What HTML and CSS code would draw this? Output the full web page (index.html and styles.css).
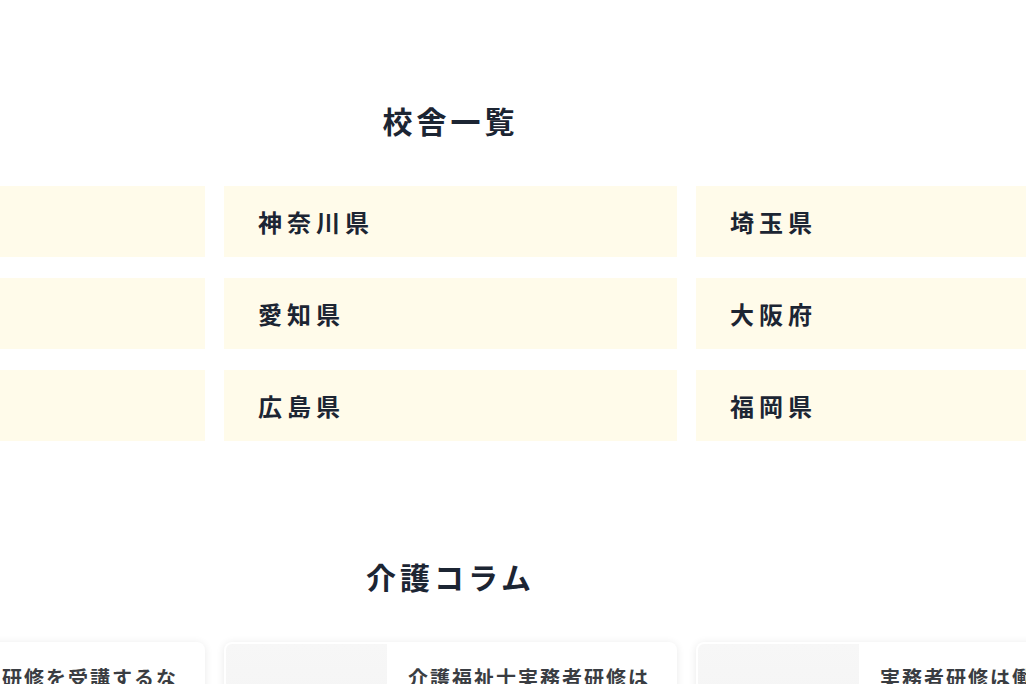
FILE: index.html
```html
<!DOCTYPE html>
<html lang="ja">
<head>
    <meta charset="UTF-8">
    <meta name="viewport" content="width=device-width, initial-scale=1.0">
    <title>校舎一覧</title>
    <link rel="stylesheet" href="styles.css">
</head>
<body>
    <section class="section schools">
        <h2 class="section-title">校舎一覧</h2>
        <ul class="pref-list">
            <li class="pref-item"><a href="#">東京都</a></li>
            <li class="pref-item"><a href="#">神奈川県</a></li>
            <li class="pref-item"><a href="#">埼玉県</a></li>
            <li class="pref-item"><a href="#">千葉県</a></li>
            <li class="pref-item"><a href="#">愛知県</a></li>
            <li class="pref-item"><a href="#">大阪府</a></li>
            <li class="pref-item"><a href="#">兵庫県</a></li>
            <li class="pref-item"><a href="#">広島県</a></li>
            <li class="pref-item"><a href="#">福岡県</a></li>
        </ul>
    </section>

    <section class="section column">
        <h2 class="section-title">介護コラム</h2>
        <div class="column-list">
            <a class="column-card" href="#">
                <div class="column-thumb"></div>
                <p class="column-text">実務者研修を受講するなら知っておきたいこと</p>
            </a>
            <a class="column-card" href="#">
                <div class="column-thumb"></div>
                <p class="column-text">介護福祉士実務者研修は誰でも受けられる？</p>
            </a>
            <a class="column-card" href="#">
                <div class="column-thumb"></div>
                <p class="column-text">実務者研修は働きながら取れる？</p>
            </a>
        </div>
    </section>
</body>
</html>
```

FILE: styles.css
```css
html,
body {
    margin: 0;
    padding: 0;
    overflow: hidden;
}

body {
    font-family: "Noto Sans CJK JP", "Noto Sans", sans-serif;
    color: #1c2533;
    background-color: #fff;
}

a {
    color: inherit;
    text-decoration: none;
}

.section {
    width: 1397px;
    margin-left: -248px;
}

.schools {
    padding-top: 98px;
}

.column {
    padding-top: 113px;
}

.section-title {
    margin: 0 0 43px;
    text-align: center;
    font-size: 30px;
    line-height: 45px;
    letter-spacing: 4px;
    font-weight: bold;
}

.pref-list {
    list-style: none;
    margin: 0;
    padding: 0;
    display: grid;
    grid-template-columns: repeat(3, 1fr);
    column-gap: 19px;
    row-gap: 21px;
}

.pref-item a {
    display: flex;
    align-items: center;
    height: 71px;
    padding: 0 34px;
    background-color: #fffbea;
    font-size: 24px;
    font-weight: bold;
    letter-spacing: 5px;
}

.column-list {
    display: grid;
    grid-template-columns: repeat(3, 1fr);
    column-gap: 19px;
}

.column-card {
    display: flex;
    height: 140px;
    background-color: #fff;
    border-radius: 8px;
    box-shadow: 0 1px 8px rgba(0, 0, 0, 0.09);
    overflow: hidden;
}

.column-thumb {
    flex: 0 0 161px;
    margin: 2px 0 2px 2px;
    border-radius: 6px 0 0 6px;
    background: linear-gradient(180deg, #f7f7f7, #f2f2f2);
}

.column-text {
    margin: 0;
    padding: 20px 22px 0 21px;
    font-size: 20px;
    line-height: 32px;
    letter-spacing: 2px;
    font-weight: bold;
    color: #3a3d42;
}
```
